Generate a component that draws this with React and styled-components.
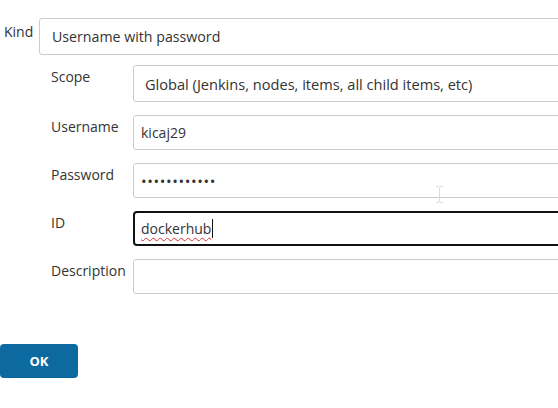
import React from "react";
import styled, { createGlobalStyle } from "styled-components";

const Global = createGlobalStyle`
  html, body { margin: 0; padding: 0; background: #fff; overflow: hidden; }
  body { font-family: "Open Sans", "Noto Sans", sans-serif; font-size: 14px; color: #333; }
`;

const Page = styled.div`
  position: relative;
  width: 100%;
  height: 408px;
  overflow: hidden;
  padding-top: 18px;
  box-sizing: border-box;
`;

const KindRow = styled.div`
  display: flex;
  align-items: flex-start;
  margin-right: -12px;
`;

const KindLabel = styled.label`
  flex: none;
  width: 39px;
  padding-left: 4px;
  padding-top: 4px;
  box-sizing: border-box;
  line-height: 20px;
`;

const Field = styled.input`
  box-sizing: border-box;
  flex: 1;
  min-width: 0;
  width: 100%;
  height: 35px;
  padding: 0 7px;
  border: 1px solid #ccc;
  border-radius: 3px;
  background: #fff;
  font: inherit;
  color: #333;
  outline: none;
`;

const Secret = styled(Field)`
  font-size: 15px;
  letter-spacing: 0.6px;
`;

const Select = styled.div`
  box-sizing: border-box;
  flex: 1;
  display: flex;
  align-items: center;
  height: 37px;
  padding: 0 ${(p) => p.$pad}px;
  border: 1px solid #ccc;
  border-radius: 3px;
  background: #fff;
  font-size: ${(p) => p.$size}px;
  white-space: nowrap;
`;

const Nested = styled.div`
  display: grid;
  grid-template-columns: 82px 1fr;
  row-gap: 13px;
  padding-left: 51px;
  margin-top: 10px;
  margin-right: -12px;
`;

const Label = styled.label`
  padding-top: 2px;
  line-height: 20px;
`;

const FocusBox = styled.div`
  box-sizing: border-box;
  height: 35px;
  display: flex;
  align-items: center;
  padding: 0 6px;
  border: 2px solid #111;
  border-radius: 4px;
  background: #fff;
`;

const Misspelled = styled.span`
  text-decoration: underline wavy #e03030;
  text-decoration-thickness: 1px;
  text-underline-offset: 3px;
`;

const Caret = styled.span`
  display: inline-block;
  width: 1px;
  height: 19px;
  background: #111;
  margin-left: 1px;
`;

const Actions = styled.div`
  margin-top: 50px;
`;

const OkButton = styled.button`
  width: 78px;
  height: 34px;
  border: none;
  border-radius: 4px;
  background: #0d6aa0;
  color: #fff;
  font-family: "Open Sans", sans-serif;
  font-weight: 700;
  font-size: 13px;
  cursor: pointer;
`;

const Cursor = styled.svg`
  position: absolute;
  left: 435px;
  top: 186px;
`;

export default function App() {
  return (
    <Page>
      <Global />
      <KindRow>
        <KindLabel>Kind</KindLabel>
        <Select $pad={12} $size={14.2}>Username with password</Select>
      </KindRow>
      <Nested>
        <Label>Scope</Label>
        <Select $pad={11} $size={14.6}>
          Global (Jenkins, nodes, items, all child items, etc)
        </Select>
        <Label>Username</Label>
        <Field readOnly value="kicaj29" />
        <Label>Password</Label>
        <Secret readOnly type="password" value="kicajpassw29" />
        <Label>ID</Label>
        <FocusBox>
          <Misspelled>dockerhub</Misspelled>
          <Caret />
        </FocusBox>
        <Label>Description</Label>
        <Field readOnly value="" />
      </Nested>
      <Actions>
        <OkButton>OK</OkButton>
      </Actions>
      <Cursor width="9" height="17" viewBox="0 0 9 17">
        <path d="M1 0.5h3M5 0.5h3M4.5 1v15M1 16.5h3M5 16.5h3" stroke="#ddd" strokeWidth="1" fill="none" />
      </Cursor>
    </Page>
  );
}
